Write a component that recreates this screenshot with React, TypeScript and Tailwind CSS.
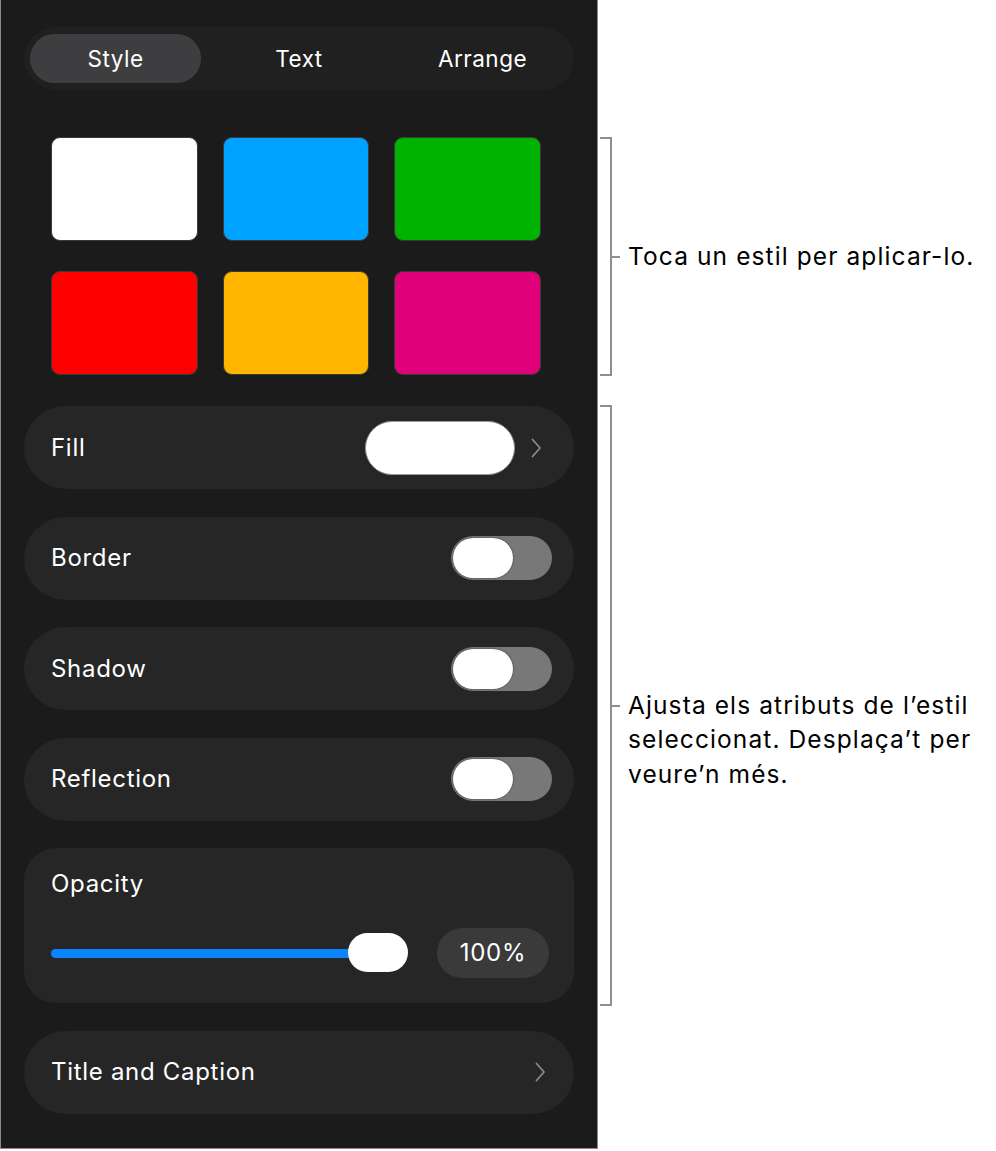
import React from "react";

//------------------------------------------------------------
const swatches = [
    "bg-white",
    "bg-[#00a2ff]",
    "bg-[#00b300]",
    "bg-[#ff0000]",
    "bg-[#ffb600]",
    "bg-[#e0007a]",
];

const toggles = ["Border", "Shadow", "Reflection"];

//------------------------------------------------------------
function Chevron() {
    return (
        <svg width="12" height="22" viewBox="0 0 12 22" fill="none">
            <path d="M2.5 2.5l7.5 8.5-7.5 8.5" stroke="#8c8c8e" strokeWidth="1.8" strokeLinecap="round" strokeLinejoin="round" />
        </svg>
    );
}

function Toggle() {
    return (
        <div className="flex items-center w-[101px] h-[44px] rounded-full bg-[#787878] px-[2px]">
            <div className="w-[60px] h-[40px] rounded-full bg-white shadow-[0_0_2px_rgba(0,0,0,0.6)]" />
        </div>
    );
}

function Row({ label, children }: { label: string; children?: React.ReactNode }) {
    return (
        <div className="flex items-center justify-between h-[83px] rounded-[42px] bg-[#262626] pl-[27px] pr-[22px]">
            <span className="text-[24px] tracking-[0.7px] text-white">{label}</span>
            {children}
        </div>
    );
}

function Callout({ height, children }: { height: number; children: React.ReactNode }) {
    return (
        <div className="flex items-center" style={{ height }}>
            <div className="w-[12px] h-full border-t-2 border-r-2 border-b-2 border-[#8e8e8e]" />
            <div className="w-[8px] h-[2px] bg-[#8e8e8e] mr-[8px]" />
            <div className="h-[34px] relative">
                <p className="w-[366px] text-[24.5px] tracking-[1.1px] leading-[34.5px] text-black -mt-[1px]">{children}</p>
            </div>
        </div>
    );
}

//------------------------------------------------------------
export default function App() {
    return (
        <div className="flex w-[996px] h-[1151px] bg-white font-['Inter','Liberation_Sans',sans-serif]">
            {/* PANEL */}
            <div className="w-[598px] h-[1149px] shrink-0 bg-[#1b1b1b] border-l border-r border-b border-[#8a8a8a] px-[23px] pt-[27px]">
                <div className="flex items-center h-[63px] rounded-full bg-[#202020] px-[6px] text-[22.5px] tracking-[0.5px] text-white">
                    <div className="flex items-center justify-center w-[171px] h-[49px] rounded-full bg-[#3e3e40]">Style</div>
                    <div className="w-[196px] text-center">Text</div>
                    <div className="flex-1 text-center">Arrange</div>
                </div>

                <div className="grid grid-cols-3 gap-x-[25px] gap-y-[30px] pl-[27px] pr-[33px] pt-[47px]">
                    {swatches.map((s, i) => (
                        <div key={i} className={`h-[104px] rounded-[9px] border border-[#3a3a3a] ${s}`} />
                    ))}
                </div>

                <div className="flex flex-col gap-[27.5px] mt-[31px]">
                    <Row label="Fill">
                        <div className="flex items-center gap-[15px] pr-[10px]">
                            <div className="w-[150px] h-[54px] rounded-full bg-white border border-[#9a9a9a]" />
                            <Chevron />
                        </div>
                    </Row>
                    {toggles.map((t) => (
                        <Row key={t} label={t}>
                            <Toggle />
                        </Row>
                    ))}
                    <div className="h-[155px] rounded-[32px] bg-[#262626] pl-[27px] pr-[25px] pt-[18px]">
                        <div className="text-[24px] tracking-[0.7px] text-white">Opacity</div>
                        <div className="flex items-center mt-[26px]">
                            <div className="relative flex items-center w-[357px] h-[40px]">
                                <div className="w-[320px] h-[9px] rounded-full bg-[#0a84ff]" />
                                <div className="absolute left-[297px] top-0 w-[60px] h-[39px] rounded-full bg-white" />
                            </div>
                            <div className="flex items-center justify-center ml-auto w-[112px] h-[50px] rounded-full bg-[#3a3a3a] text-[24px] tracking-[0.7px] text-white">
                                100%
                            </div>
                        </div>
                    </div>
                    <div className="flex items-center justify-between h-[83px] rounded-[42px] bg-[#262626] pl-[27px] pr-[28px]">
                        <span className="text-[24px] tracking-[0.7px] text-white">Title and Caption</span>
                        <Chevron />
                    </div>
                </div>
            </div>

            {/* CALLOUTS */}
            <div className="flex flex-col pt-[137px] pl-[2px]">
                <Callout height={239}>Toca un estil per aplicar-lo.</Callout>
                <div className="h-[29px]" />
                <Callout height={601}>
                    Ajusta els atributs de l’estil seleccionat. Desplaça’t per veure’n més.
                </Callout>
            </div>
        </div>
    );
}
